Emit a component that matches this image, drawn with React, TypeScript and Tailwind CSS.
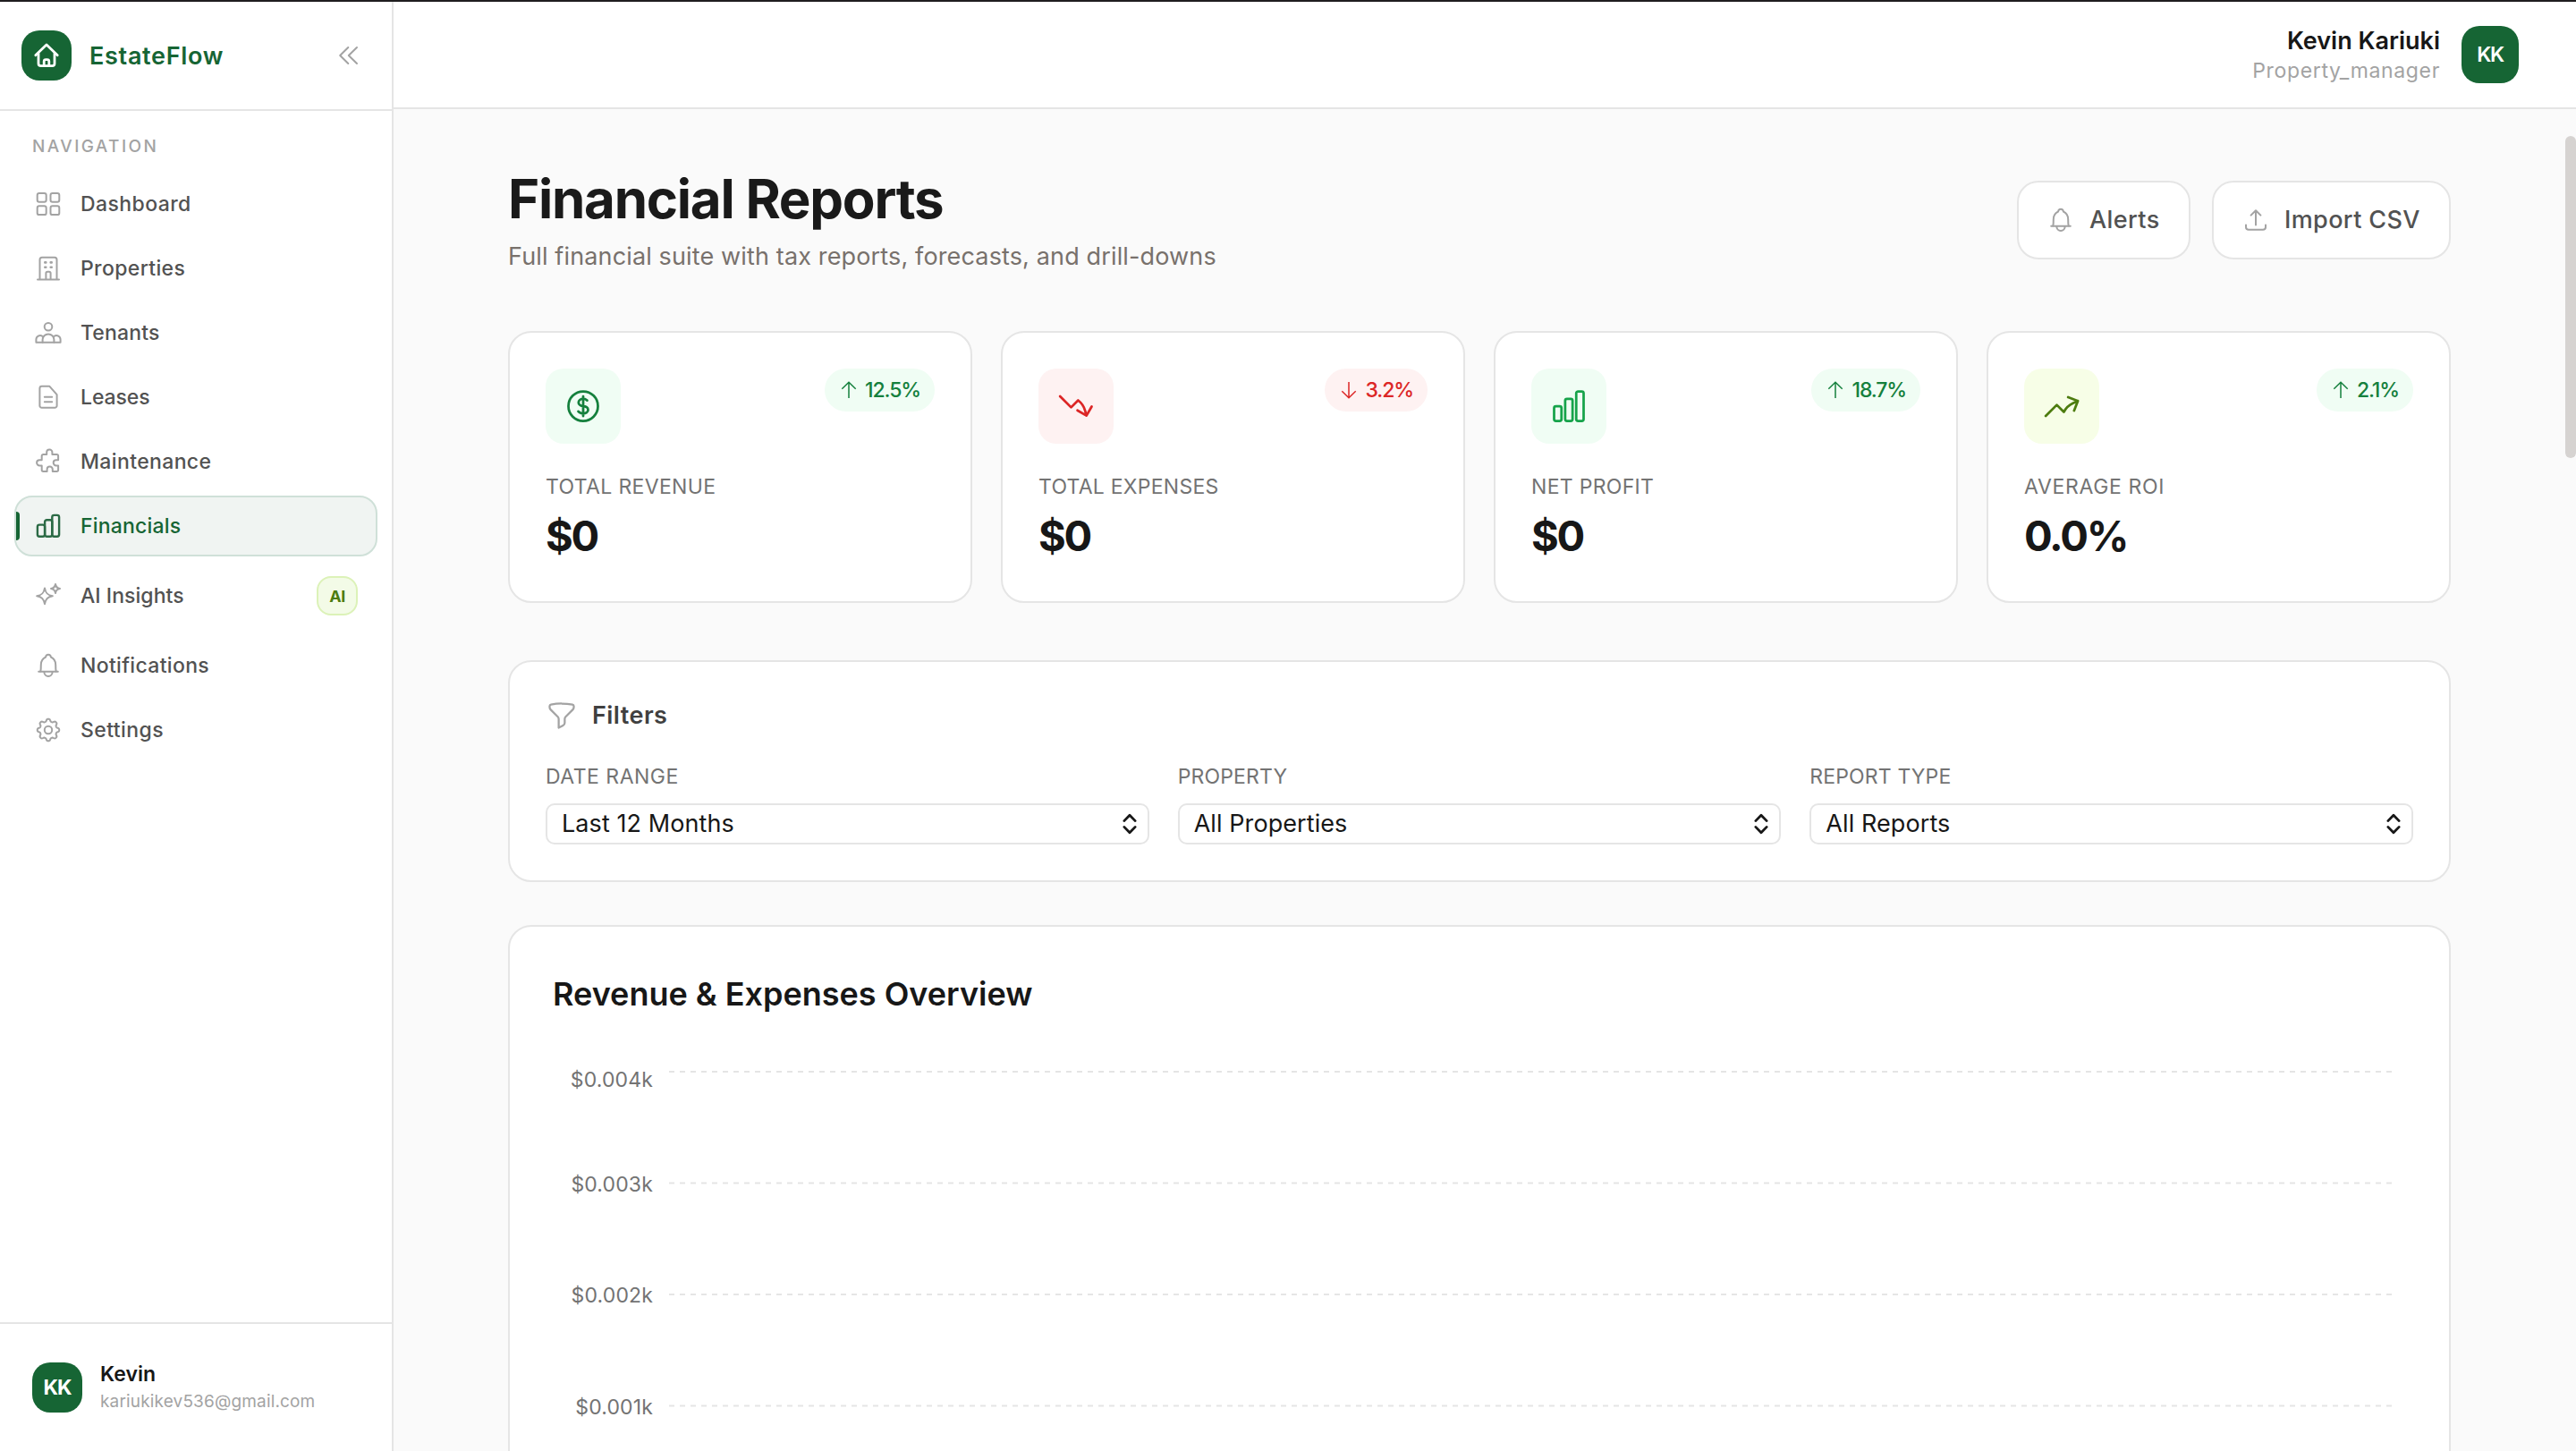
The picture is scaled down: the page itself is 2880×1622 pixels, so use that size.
import React from "react";
import {
  HiOutlineArrowTrendingDown,
  HiOutlineArrowTrendingUp,
  HiOutlineChartBar,
  HiOutlineCurrencyDollar,
  HiOutlineFunnel,
} from "react-icons/hi2";

type IconProps = { className?: string; strokeWidth?: number; children?: React.ReactNode };

function Svg({ className = "", strokeWidth = 2, children }: IconProps) {
  return (
    <svg
      viewBox="0 0 32 32"
      fill="none"
      stroke="currentColor"
      strokeWidth={strokeWidth}
      strokeLinecap="round"
      strokeLinejoin="round"
      className={`size-8 shrink-0 ${className}`}
    >
      {children}
    </svg>
  );
}

// Eight-lobed gear outline, sampled from a cosine-modulated circle.
const gearPath =
  Array.from({ length: 128 }, (_, i) => {
    const a = (i / 128) * Math.PI * 2;
    const r = 10.9 + 1.4 * Math.tanh(1.8 * Math.cos(8 * a));
    return `${i ? "L" : "M"}${(16 + r * Math.sin(a)).toFixed(2)} ${(16 - r * Math.cos(a)).toFixed(2)}`;
  }).join("") + "Z";

const GridIcon = () => (
  <Svg>
    <rect x="3.7" y="4" width="10" height="9.8" rx="2.2" />
    <rect x="18.5" y="4" width="9.8" height="9.8" rx="2.2" />
    <rect x="3.7" y="18.3" width="10" height="9.8" rx="2.2" />
    <rect x="18.5" y="18.3" width="9.8" height="9.8" rx="2.2" />
  </Svg>
);
const BuildingIcon = () => (
  <Svg>
    <path d="M6.500 28V6.200a2.500 2.500 0 0 1 2.500-2.500h14a2.500 2.500 0 0 1 2.500 2.500V28" />
    <path d="M4 28.400h24M13.400 28v-6.500a1.800 1.800 0 0 1 1.800-1.800h1.600a1.800 1.800 0 0 1 1.800 1.800V28" />
    <path d="M12.300 9.400h1M18.700 9.400h1M12.300 14.800h1M18.700 14.800h1" strokeWidth="2.6" />
  </Svg>
);
const TenantsIcon = () => (
  <Svg>
    <circle cx="16" cy="9.2" r="4.3" />
    <path d="M9.600 26.800v-3a6.400 6.400 0 0 1 12.800 0v3" />
    <path d="M9.400 19.800a4.600 4.600 0 0 0-7 4v3h27.200v-3a4.600 4.600 0 0 0-7-4" />
  </Svg>
);
const LeaseIcon = () => (
  <Svg>
    <path d="M6.400 6.200A2.400 2.400 0 0 1 8.800 3.800h8.600l8.200 9.400v12.200a2.400 2.400 0 0 1-2.400 2.400H8.800a2.400 2.400 0 0 1-2.400-2.400Z" />
    <path d="M11.800 15.800h8.400M11.800 21.200h8.400" />
  </Svg>
);
const PuzzleIcon = () => (
  <Svg>
    <path d="M8.700 9.700a1.700 1.700 0 0 1 1.700-1.700h3.800V5.600a3.100 3.100 0 0 1 6.200 0V8h5a1.700 1.700 0 0 1 1.700 1.700v4.500h-2.300a3.100 3.100 0 0 0 0 6.200h2.300v4.900a1.700 1.700 0 0 1-1.700 1.700h-4.600v-2.300a3.100 3.100 0 0 0-6.200 0V27h-4.200a1.700 1.700 0 0 1-1.700-1.700v-4.900H6.200a3.100 3.100 0 0 1 0-6.200h2.500Z" />
  </Svg>
);
const BarsIcon = () => (
  <Svg strokeWidth={2.4}>
    <rect x="3.9" y="14.6" width="8.2" height="13.2" rx="2.2" />
    <rect x="12.1" y="9.2" width="8.2" height="18.6" rx="2.2" />
    <rect x="20.3" y="3.9" width="7.8" height="23.9" rx="2.2" />
  </Svg>
);
const SparklesIcon = () => (
  <Svg>
    <path d="M12 7.400c.9 5.600 3.200 8 8.800 8.900-5.600.9-7.900 3.300-8.800 8.900-.9-5.600-3.200-8-8.800-8.900 5.600-.9 7.900-3.300 8.800-8.900Z" />
    <path d="M24 3c.5 3.200 1.800 4.500 5 5-3.200.5-4.500 1.800-5 5-.5-3.200-1.800-4.500-5-5 3.200-.5 4.500-1.800 5-5Z" />
  </Svg>
);
const BellIcon = ({ className }: IconProps) => (
  <Svg className={className}>
    <path d="M7.300 22.500c.5-2 .5-4.500.5-7.300 0-4.400 2.200-7.200 5.300-8.700.2-1.800 1.300-2.700 2.900-2.700s2.700.9 2.900 2.700c3.100 1.500 5.300 4.300 5.300 8.700 0 2.800 0 5.300.5 7.300" />
    <path d="M5.200 22.800h21.600M11.400 23.200a4.600 4.800 0 0 0 9.200 0" />
  </Svg>
);
const GearIcon = () => (
  <Svg>
    <path d={gearPath} />
    <circle cx="16" cy="16" r="4.2" />
  </Svg>
);
const UploadIcon = () => (
  <Svg className="text-[#a3a3a3]">
    <path d="M16 21.600V5.200M10.600 10.600 16 5.200l5.400 5.400M5 21.400v2.400a3 3 0 0 0 3 3h16a3 3 0 0 0 3-3v-2.400" />
  </Svg>
);
const ArrowIcon = ({ down }: { down?: boolean }) => (
  <svg viewBox="0 0 20 20" fill="none" stroke="currentColor" strokeWidth="1.5" className="size-5 shrink-0">
    <path d={down ? "M10 1v17.500M2.300 11.200l7.700 7.500 7.700-7.500" : "M10 19V1.500M2.300 8.800 10 1.300l7.700 7.500"} />
  </svg>
);

const nav = [
  { label: "Dashboard", icon: <GridIcon />, track: "tracking-[0.41px]" },
  { label: "Properties", icon: <BuildingIcon />, track: "tracking-[0.36px]" },
  { label: "Tenants", icon: <TenantsIcon />, track: "tracking-[0.15px]" },
  { label: "Leases", icon: <LeaseIcon />, track: "tracking-[-0.1px]" },
  { label: "Maintenance", icon: <PuzzleIcon />, track: "tracking-[0.37px]" },
  { label: "Financials", icon: <BarsIcon />, track: "tracking-[0.2px]", active: true },
  { label: "AI Insights", icon: <SparklesIcon />, track: "tracking-[0.05px]", badge: "AI" },
  { label: "Notifications", icon: <BellIcon />, track: "tracking-[0.33px]" },
  { label: "Settings", icon: <GearIcon />, track: "tracking-[0.42px]" },
];

function Sidebar() {
  return (
    <aside className="flex w-[440px] shrink-0 flex-col border-r-2 border-[#e5e5e5] bg-white">
      <div className="flex h-[122px] shrink-0 items-center border-b-2 border-[#e5e5e5] pl-6 pr-[33px]">
        <div className="flex size-14 items-center justify-center rounded-[20px] bg-[#166534] text-white">
          <Svg strokeWidth={2.8}>
            <path d="M3.800 15.800 16 4l12.200 11.800" />
            <path d="M7 14v11a2.600 2.600 0 0 0 2.600 2.600h12.800A2.600 2.600 0 0 0 25 25V14" />
            <path d="M13.200 27v-4.400a2 2 0 0 1 2-2h1.600a2 2 0 0 1 2 2V27" />
          </Svg>
        </div>
        <span className="ml-5 pt-0.5 text-[27px] font-semibold tracking-[0.68px] text-[#166534]">EstateFlow</span>
        <Svg className="ml-auto text-[#a3a3a3]">
          <path d="M16.300 7 7.200 16l9.100 9M26 7l-9.200 9 9.200 9" />
        </Svg>
      </div>
      <div className="pt-[30px] pl-9 text-[19px] leading-5 font-medium tracking-[2.4px] text-[#a3a3a3]">NAVIGATION</div>
      <nav className="mt-5 flex flex-col gap-1 px-4">
        {nav.map((n) => (
          <div
            key={n.label}
            className={`relative flex items-center gap-5 rounded-[20px] border-2 px-5 ${n.badge ? "h-20" : "h-[68px]"} ${
              n.active ? "border-[#cfe0d8] bg-[#f0f4f2] text-[#166534]" : "border-transparent text-[#525252]"
            }`}
          >
            {n.active && <span className="absolute top-4 left-0 h-8 w-1 rounded-r-[4px] bg-[#166534]" />}
            <span className={n.active ? "text-[#2b6a45]" : "text-[#a3a3a3]"}>{n.icon}</span>
            <span className={`text-[23px] font-medium ${n.track}`}>{n.label}</span>
            {n.badge && (
              <span className="ml-auto flex h-11 w-[46px] items-center justify-center rounded-2xl border-2 border-[#dcf2b8] bg-[#f3fbe7] text-[18px] font-bold tracking-[-0.4px] text-[#4d7c0f]">
                {n.badge}
              </span>
            )}
          </div>
        ))}
      </nav>
      <div className="mt-auto flex h-36 shrink-0 items-center border-t-2 border-[#e5e5e5] pl-9">
        <div className="flex size-14 items-center justify-center rounded-[20px] bg-[#166534] text-[23px] font-bold tracking-[-1px] text-white">
          KK
        </div>
        <div className="ml-5 flex flex-col pt-0.5">
          <span className="text-[23px] leading-[30px] font-semibold text-[#171717]">Kevin</span>
          <span className="text-[19px] leading-8 tracking-[0.16px] text-[#a3a3a3]">kariukikev536@gmail.com</span>
        </div>
      </div>
    </aside>
  );
}

const stats = [
  {
    label: "TOTAL REVENUE",
    track: "tracking-[0.35px]",
    value: "$0",
    delta: "12.5%",
    down: false,
    icon: <HiOutlineCurrencyDollar className="size-11" />,
    tone: "bg-[#f0fdf4] text-[#15803d]",
  },
  {
    label: "TOTAL EXPENSES",
    track: "tracking-[0.25px]",
    value: "$0",
    delta: "3.2%",
    down: true,
    icon: <HiOutlineArrowTrendingDown className="size-11" />,
    tone: "bg-[#fef2f2] text-[#dc2626]",
  },
  {
    label: "NET PROFIT",
    track: "tracking-[0.3px]",
    value: "$0",
    delta: "18.7%",
    down: false,
    icon: <HiOutlineChartBar className="size-11" />,
    tone: "bg-[#f0fdf4] text-[#16a34a]",
  },
  {
    label: "AVERAGE ROI",
    track: "tracking-[0.66px]",
    value: "0.0%",
    delta: "2.1%",
    down: false,
    icon: <HiOutlineArrowTrendingUp className="size-11" />,
    tone: "bg-[#f7fee7] text-[#4d7c0f]",
  },
];

const filters = [
  { label: "DATE RANGE", value: "Last 12 Months", track: "tracking-[0.5px]" },
  { label: "PROPERTY", value: "All Properties", track: "tracking-[0.15px]" },
  { label: "REPORT TYPE", value: "All Reports", track: "tracking-[0.15px]" },
];

const ticks = [
  { label: "$0.004k", line: 38, base: 55 },
  { label: "$0.003k", line: 162.5, base: 172 },
  { label: "$0.002k", line: 287, base: 296 },
  { label: "$0.001k", line: 411.5, base: 421 },
];

export default function App() {
  return (
    <div className="flex h-[1622px] w-full flex-col overflow-hidden bg-[#fafafa] font-['Inter',sans-serif]">
      <div className="h-0.5 shrink-0 bg-[#1f1d1f]" />
      <div className="flex min-h-0 flex-1">
        <Sidebar />
        <div className="flex min-w-0 flex-1 flex-col">
          <header className="flex h-[120px] shrink-0 items-center justify-end gap-6 border-b-2 border-[#e5e5e5] bg-white pr-16">
            <div className="flex flex-col items-end pt-0.5">
              <span className="text-[27px] leading-[34px] font-semibold text-[#171717]">Kevin Kariuki</span>
              <span className="text-[23px] leading-8 tracking-[0.65px] text-[#a3a3a3]">Property_manager</span>
            </div>
            <div className="flex size-16 items-center justify-center rounded-[20px] bg-[#166534] text-[23px] font-semibold tracking-[-1.4px] text-white">
              KK
            </div>
          </header>
          <div className="flex min-h-0 flex-1">
            <main className="min-w-0 flex-1 overflow-hidden px-32 pt-16">
              <div className="flex items-center justify-between">
                <div>
                  <h1 className="text-[60px] leading-[72px] font-bold tracking-[-1.25px] text-[#1a1a1a]">Financial Reports</h1>
                  <p className="mt-2 pt-px text-[27px] leading-[39px] tracking-[0.14px] text-[#78716c]">
                    Full financial suite with tax reports, forecasts, and drill-downs
                  </p>
                </div>
                <div className="flex gap-6 text-[27px] font-medium text-[#525252]">
                  <div className="flex h-[88px] w-[194px] items-center gap-4 rounded-3xl border-2 border-[#e5e5e5] bg-white pl-[31px] tracking-[0.4px]">
                    <BellIcon className="text-[#a3a3a3]" />
                    <span className="pt-px">Alerts</span>
                  </div>
                  <div className="flex h-[88px] w-[267px] items-center gap-4 rounded-3xl border-2 border-[#e5e5e5] bg-white pl-[31px] tracking-[0.38px] whitespace-nowrap">
                    <UploadIcon />
                    <span className="pt-px">Import CSV</span>
                  </div>
                </div>
              </div>

              <div className="mt-16 grid grid-cols-4 gap-x-8">
                {stats.map((s) => (
                  <div key={s.label} className="h-[304px] rounded-[26px] border-2 border-[#e5e5e5] bg-white p-10">
                    <div className="flex items-start justify-between">
                      <div className={`flex size-[84px] items-center justify-center rounded-[20px] ${s.tone}`}>{s.icon}</div>
                      <div
                        className={`flex h-12 items-center gap-2 rounded-full pr-4 pl-[17px] text-[23px] font-medium tracking-[-1.1px] ${
                          s.down ? "bg-[#fef2f2] text-[#dc2626]" : "bg-[#f0fdf4] text-[#15803d]"
                        }`}
                      >
                        <ArrowIcon down={s.down} />
                        {s.delta}
                      </div>
                    </div>
                    <div className={`mt-8 text-[23px] leading-8 text-[#737373] ${s.track}`}>{s.label}</div>
                    <div className="mt-[11px] text-[47px] leading-[56px] font-bold tracking-[-2.2px] text-[#171717]">{s.value}</div>
                  </div>
                ))}
              </div>

              <section className="mt-16 h-[248px] rounded-[26px] border-2 border-[#e5e5e5] bg-white p-10">
                <div className="flex h-10 items-center gap-4">
                  <HiOutlineFunnel className="size-9 text-[#a3a3a3]" />
                  <span className="pt-px text-[27px] font-semibold tracking-[0.45px] text-[#404040]">Filters</span>
                </div>
                <div className="mt-8 grid grid-cols-3 gap-x-8">
                  {filters.map((f) => (
                    <div key={f.label}>
                      <div className={`text-[23px] leading-8 text-[#737373] ${f.track}`}>{f.label}</div>
                      <div className="mt-3.5 flex h-[46px] items-center justify-between rounded-[10px] border-2 border-[#e5e5e5] bg-white pr-2.5 pl-4">
                        <span className="text-[27px] tracking-[0.08px] text-[#171717]">{f.value}</span>
                        <svg
                          viewBox="0 0 20 24"
                          fill="none"
                          stroke="#171717"
                          strokeWidth="2.8"
                          strokeLinecap="round"
                          strokeLinejoin="round"
                          className="h-6 w-5"
                        >
                          <path d="m3.800 8.600 6.200-6.400 6.200 6.400M3.800 15.400l6.200 6.400 6.200-6.400" />
                        </svg>
                      </div>
                    </div>
                  ))}
                </div>
              </section>

              <section className="mt-12 h-[800px] rounded-[26px] border-2 border-[#e5e5e5] bg-white px-12 pt-[51px]">
                <h2 className="text-[36px] leading-[48px] font-semibold text-[#171717]">Revenue &amp; Expenses Overview</h2>
                <svg viewBox="0 0 2072 462" className="mt-[25px] h-[462px] w-[2072px]">
                  {ticks.map((t) => (
                    <g key={t.label}>
                      <line x1="130" x2="2058" y1={t.line} y2={t.line} stroke="#e5e5e5" strokeWidth="2" strokeDasharray="6 6" />
                      <text x="112" y={t.base} textAnchor="end" fill="#737373" className="text-[23px] tracking-[0.15px]">
                        {t.label}
                      </text>
                    </g>
                  ))}
                </svg>
              </section>
            </main>
            <div className="w-3 shrink-0 pt-[30px]">
              <div className="h-[360px] rounded-full bg-[#d6d3d1]" />
            </div>
          </div>
        </div>
      </div>
    </div>
  );
}
